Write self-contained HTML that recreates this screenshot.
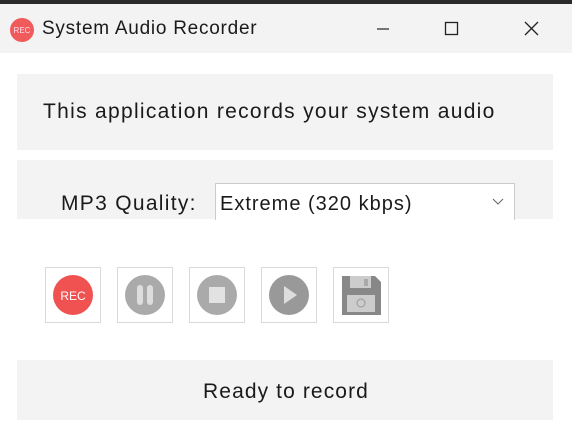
<!DOCTYPE html><html><head><style>
body{margin:0;width:572px;height:431px;background:#fff;font-family:"Liberation Sans",sans-serif;position:relative;overflow:hidden;color:#1a1a1a}
.a{position:absolute}
.p{background:#f3f3f3;left:17px;width:536px}
.b{position:absolute;top:267px;width:54px;height:54px;border:1px solid #d9d9d9;background:#fff}
.b svg{position:absolute;left:7px;top:7px}
</style></head><body>
<div class="a" style="left:0;top:0;width:572px;height:4px;background:#2a2a2a"></div>
<div class="a" style="left:0;top:4px;width:572px;height:49px;background:#f3f3f3"></div>
<svg class="a" style="left:9px;top:17px" width="26" height="26"><circle cx="13" cy="13" r="12" fill="#f05a5a"/><text x="13" y="16" font-size="8" fill="#fde" text-anchor="middle" font-family="Liberation Sans">REC</text></svg>
<div class="a" style="left:42px;top:18px;font-size:19px;letter-spacing:0.75px">System Audio Recorder</div>
<svg class="a" style="left:370px;top:18px" width="180" height="22"><line x1="7" y1="11" x2="19" y2="11" stroke="#222" stroke-width="1.2"/><rect x="75.5" y="4.5" width="12" height="12" fill="none" stroke="#222" stroke-width="1.3"/><path d="M155 4L168 17M168 4L155 17" stroke="#222" stroke-width="1.3"/></svg>
<div class="a p" style="top:74px;height:76px"></div>
<div class="a" style="left:43px;top:100px;font-size:21px;letter-spacing:1.3px">This application records your system audio</div>
<div class="a p" style="top:160px;height:59px"></div>
<div class="a" style="left:61px;top:192px;font-size:21px;letter-spacing:1.3px">MP3 Quality:</div>
<div class="a" style="left:215px;top:183px;width:298px;height:36px;background:#fff;border:1px solid #ccc;border-bottom:none"></div>
<div class="a" style="left:220px;top:193px;font-size:20px;letter-spacing:1px">Extreme (320 kbps)</div>
<svg class="a" style="left:492px;top:198px" width="12" height="8"><path d="M1 1L6 6L11 1" fill="none" stroke="#666"/></svg>
<div class="b" style="left:45px"><svg width="40" height="40"><circle cx="20" cy="20" r="20" fill="#f05252"/><text x="20" y="25" font-size="12" fill="#fff" text-anchor="middle" font-family="Liberation Sans">REC</text></svg></div>
<div class="b" style="left:117px"><svg width="40" height="40"><circle cx="20" cy="20" r="20" fill="#aaa"/><rect x="12" y="10" width="6" height="20" rx="3" fill="#ddd"/><rect x="22" y="10" width="6" height="20" rx="3" fill="#ddd"/></svg></div>
<div class="b" style="left:189px"><svg width="40" height="40"><circle cx="20" cy="20" r="20" fill="#aaa"/><rect x="12" y="12" width="16" height="16" fill="#e2e2e2"/></svg></div>
<div class="b" style="left:261px"><svg width="40" height="40"><circle cx="20" cy="20" r="20" fill="#999"/><path d="M15 11L28 20L15 29Z" fill="#ddd"/></svg></div>
<div class="b" style="left:333px"><svg width="40" height="40"><path d="M1 1H34L40 7V40H1Z" fill="#888"/><rect x="9" y="1" width="21" height="12" fill="#ccc"/><rect x="23" y="4" width="4" height="7" fill="#aaa"/><rect x="6" y="20" width="28" height="17" fill="#ccc"/><circle cx="20" cy="28" r="4" fill="none" stroke="#999"/></svg></div>
<div class="a p" style="top:360px;height:60px"></div>
<div class="a" style="left:0;width:572px;top:380px;font-size:21px;letter-spacing:1.1px;text-align:center">Ready to record</div>
</body></html>
